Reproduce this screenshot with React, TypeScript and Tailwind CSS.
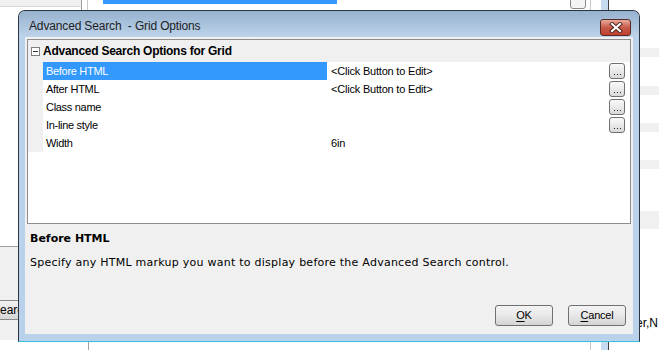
import React from "react";

const tahoma = { fontFamily: '"Liberation Sans", Arial, sans-serif' };
const verdana = { fontFamily: '"DejaVu Sans", Verdana, sans-serif' };

function Ellipsis() {
  return (
    <div className="w-[16px] h-[16px] rounded-[3px] border border-[#707070] bg-gradient-to-b from-[#fafafa] to-[#d9d9d9] flex items-end justify-center pb-[3px]">
      <div className="flex gap-[2px]">
        <span className="w-[1px] h-[1px] bg-[#222]" />
        <span className="w-[1px] h-[1px] bg-[#222]" />
        <span className="w-[1px] h-[1px] bg-[#222]" />
      </div>
    </div>
  );
}

const rows = [
  { name: "Before HTML", value: "<Click Button to Edit>", btn: true, sel: true },
  { name: "After HTML", value: "<Click Button to Edit>", btn: true },
  { name: "Class name", value: "", btn: true },
  { name: "In-line style", value: "", btn: true },
  { name: "Width", value: "6in", btn: false },
];

function WinButton({ label, u }: { label: string; u: number }) {
  return (
    <div className="w-[58px] h-[21px] rounded-[3px] border border-[#707070] bg-gradient-to-b from-[#f4f4f4] via-[#e8e8e8] to-[#d4d4d4] flex items-center justify-center text-[11px] text-black tracking-[-0.2px]" style={tahoma}>
      <span>
        {label.slice(0, u)}
        <span className="underline underline-offset-2">{label[u]}</span>
        {label.slice(u + 1)}
      </span>
    </div>
  );
}

export default function App() {
  return (
    <div className="relative w-[659px] h-[350px] overflow-hidden bg-white">
      {/* background window fragments */}
      <div className="absolute left-0 top-0 w-[81px] h-[7px] bg-[#f0f0f0] border-b border-[#d8d8d8]" />
      <div className="absolute left-[81px] top-0 w-[1px] h-[12px] bg-[#a0a0a0]" />
      <div className="absolute left-[87px] top-0 w-[1px] h-[12px] bg-[#c8c8c8]" />
      <div className="absolute left-[103px] top-0 w-[234px] h-[4px] bg-[#3399ff]" />
      <div className="absolute left-[570px] top-[-6px] w-[16px] h-[15px] rounded-[3px] border border-[#8a8a8a] bg-[#f4f4f4]" />
      <div className="absolute left-[590px] top-0 w-[1px] h-[350px] bg-[#c8c8c8]" />
      <div className="absolute left-[601px] top-0 w-[7px] h-[350px] bg-[#c6daf0]" />
      <div className="absolute left-[608px] top-0 w-[1px] h-[350px] bg-[#404040]" />
      <div className="absolute left-[640px] top-[48px] w-[19px] h-[9px] bg-[#f0f0f0]" />
      <div className="absolute left-[640px] top-[86px] w-[19px] h-[9px] bg-[#f0f0f0]" />
      <div className="absolute left-[640px] top-[123px] w-[19px] h-[9px] bg-[#f0f0f0]" />
      <div className="absolute left-[640px] top-[160px] w-[19px] h-[9px] bg-[#f0f0f0]" />
      <div className="absolute left-[640px] top-[211px] w-[19px] h-[18px] bg-[#f0f0f0]" />
      <div className="absolute left-[636px] top-[316px] text-[12px] leading-[14px] text-black" style={tahoma}>er,N</div>
      <div className="absolute left-0 top-[246px] w-[18px] h-[94px] bg-[#f0f0f0] border-t border-[#a0a0a0]" />
      <div className="absolute left-0 top-[300px] w-[34px] h-[20px] border-y border-[#8a8a8a] bg-gradient-to-b from-[#f2f2f2] to-[#d6d6d6] flex items-center pl-0 text-[12px] text-black" style={tahoma}>earc</div>
      <div className="absolute left-[88px] top-[330px] w-[1px] h-[20px] bg-[#a0a0a0]" />

      {/* dialog */}
      <div className="absolute left-[18px] top-[10px] w-[622px] h-[332px] rounded-t-[7px] border border-[#2b3440] border-b-[#38c0e0] bg-[#b9d1ea] flex flex-col">
        {/* title bar */}
        <div className="h-[26px] rounded-t-[6px] bg-gradient-to-b from-[#97b2cf] to-[#bdd3ea] flex items-start justify-between pl-[10px] pr-[8px]">
          <span className="mt-[8px] text-[12px] leading-[14px] text-[#1e1e1e] whitespace-pre tracking-[-0.15px]" style={tahoma}>Advanced Search  - Grid Options</span>
          <div className="mt-[8px] w-[31px] h-[17px] rounded-[3px] border border-[#5a2a20] bg-gradient-to-b from-[#e8aa9c] via-[#c85a4a] to-[#c0402e] flex items-center justify-center">
            <svg width="14" height="11" viewBox="0 0 14 11">
              <path d="M3 2 L11 9 M11 2 L3 9" stroke="#4a2018" strokeWidth="4" strokeLinecap="square" />
              <path d="M3 2 L11 9 M11 2 L3 9" stroke="#ffffff" strokeWidth="2.2" strokeLinecap="square" />
            </svg>
          </div>
        </div>

        {/* body */}
        <div className="flex-1 mx-[6px] mb-[7px] bg-[#f0f0f0] p-[2px] flex flex-col">
          {/* property grid */}
          <div className="h-[185px] border border-[#8d8d8d] bg-white flex flex-col">
            <div className="h-[22px] bg-[#f0f0f0] flex items-center">
              <div className="w-[15px] flex justify-center">
                <div className="w-[9px] h-[9px] border border-[#808080] bg-white flex items-center justify-center">
                  <span className="w-[5px] h-[1px] bg-[#333]" />
                </div>
              </div>
              <span className="text-[12px] font-bold text-black tracking-[-0.25px]" style={tahoma}>Advanced Search Options for Grid</span>
            </div>
            {rows.map((r) => (
              <div key={r.name} className="h-[18px] flex">
                <div className="w-[15px] bg-[#f0f0f0]" />
                <div className={`w-[284px] flex items-center pl-[3px] text-[11px] tracking-[-0.3px] ${r.sel ? "bg-[#3399ff] text-white" : "text-black"}`} style={tahoma}>{r.name}</div>
                <div className="flex-1 flex items-center justify-between pl-[4px] pr-[5px] text-[11px] tracking-[-0.2px] text-black" style={tahoma}>
                  <span>{r.value}</span>
                  {r.btn && <Ellipsis />}
                </div>
              </div>
            ))}
          </div>
          {/* description */}
          <div className="pl-[3px] pt-[8px]">
            <div className="text-[11px] leading-[13px] font-bold text-black" style={verdana}>Before HTML</div>
            <div className="mt-[11px] text-[11px] leading-[13px] text-black tracking-[0.25px]" style={verdana}>Specify any HTML markup you want to display before the Advanced Search control.</div>
          </div>
          <div className="flex-1" />
          <div className="flex justify-end gap-[15px] pr-[5px] pb-[6px]">
            <WinButton label="OK" u={0} />
            <WinButton label="Cancel" u={0} />
          </div>
        </div>
      </div>
    </div>
  );
}
